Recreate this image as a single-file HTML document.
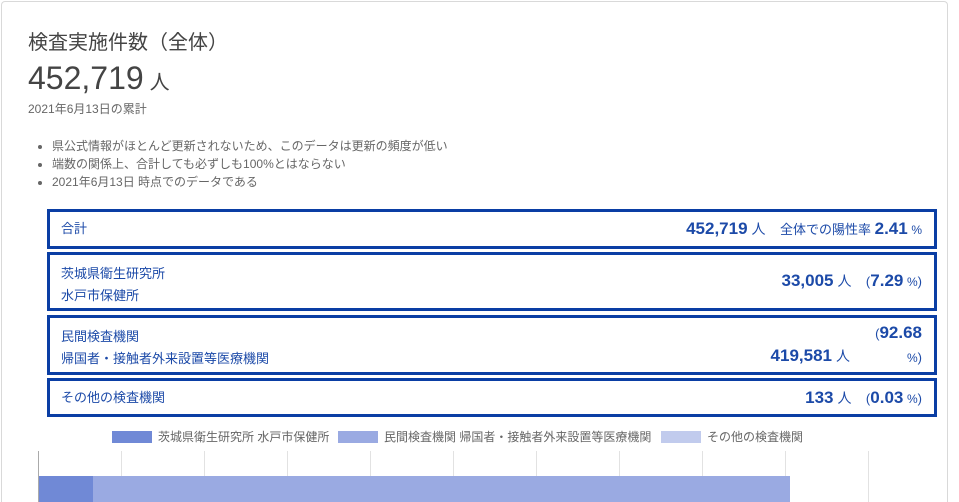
<!DOCTYPE html>
<html style="height:502px;overflow:hidden"><head><meta charset="utf-8"><style>
*{margin:0;padding:0;box-sizing:border-box}
body{width:959px;height:502px;overflow:hidden;background:#fff;font-family:"Liberation Sans","Noto Sans CJK JP",sans-serif;color:#333;position:relative}
.card{position:absolute;left:1px;top:1px;width:947px;height:501px;border:1px solid #d9d9d9;border-bottom:none;border-radius:4px 4px 0 0}
.t{position:absolute;left:28px;top:26px;font-size:20px;color:#444}
.n{position:absolute;left:28px;top:60px;font-size:32px;color:#444}
.n small{font-size:20px;margin-left:6px}
.d{position:absolute;left:28px;top:100px;font-size:12px;color:#666}
ul{position:absolute;left:52px;top:137px;font-size:12px;color:#666;line-height:18px}
.b{position:absolute;left:47px;width:890px;border:3px solid #0a3ea4;color:#1c4aa8;font-size:13px;line-height:18px}
.b .l{position:absolute;left:11px}
.b .r{position:absolute;right:12px;text-align:right;line-height:20px}
.big{font-size:17px;font-weight:bold}
.u{font-size:14px;margin-left:4px}
.pc{font-size:12px}
.lg{position:absolute;top:428px;font-size:12px;color:#666;display:flex;align-items:center}
.sw{width:40px;height:12px;display:inline-block;margin-right:6px}
.g{position:absolute;top:451px;width:1px;height:51px;background:#e2e2e2}
</style></head><body>
<div class="card"></div>
<div class="t">検査実施件数（全体）</div>
<div class="n">452,719<small>人</small></div>
<div class="d">2021年6月13日の累計</div>
<ul><li>県公式情報がほとんど更新されないため、このデータは更新の頻度が低い</li><li>端数の関係上、合計しても必ずしも100%とはならない</li><li>2021年6月13日 時点でのデータである</li></ul>
<div class="b" style="top:209px;height:40px"><span class="l" style="top:8px">合計</span><span class="r" style="top:7px"><span class="big">452,719</span><span class="u">人</span>&nbsp;&nbsp;&nbsp;&nbsp;全体での陽性率 <span class="big">2.41</span> <span class="pc">%</span></span></div>
<div class="b" style="top:252px;height:59px"><span class="l" style="top:8px;line-height:22px">茨城県衛生研究所<br>水戸市保健所</span><span class="r" style="top:16px"><span class="big">33,005</span><span class="u">人</span>&nbsp;&nbsp;&nbsp;&nbsp;(<span class="big">7.29</span> <span class="pc">%</span>)</span></div>
<div class="b" style="top:315px;height:60px"><span class="l" style="top:8px;line-height:22px">民間検査機関<br>帰国者・接触者外来設置等医療機関</span><span class="r" style="top:5px;right:12px">(<span class="big">92.68</span></span><span class="r" style="top:28px;right:84px"><span class="big">419,581</span><span class="u">人</span></span><span class="r" style="top:30px;right:12px"><span class="pc">%</span>)</span></div>
<div class="b" style="top:378px;height:39px"><span class="l" style="top:8px">その他の検査機関</span><span class="r" style="top:7px"><span class="big">133</span><span class="u">人</span>&nbsp;&nbsp;&nbsp;&nbsp;(<span class="big">0.03</span> <span class="pc">%</span>)</span></div>
<div class="lg" style="left:112px"><span class="sw" style="background:#7089d6"></span>茨城県衛生研究所 水戸市保健所</div>
<div class="lg" style="left:338px"><span class="sw" style="background:#9aaae2"></span>民間検査機関 帰国者・接触者外来設置等医療機関</div>
<div class="lg" style="left:661px"><span class="sw" style="background:#c1cbed"></span>その他の検査機関</div>
<div class="g" style="left:38px;background:#aaa"></div><div class="g" style="left:121px"></div><div class="g" style="left:204px"></div><div class="g" style="left:287px"></div><div class="g" style="left:370px"></div><div class="g" style="left:453px"></div><div class="g" style="left:536px"></div><div class="g" style="left:619px"></div><div class="g" style="left:702px"></div><div class="g" style="left:785px"></div><div class="g" style="left:868px"></div>
<div style="position:absolute;left:39px;top:476px;width:54px;height:26px;background:#7089d6"></div>
<div style="position:absolute;left:93px;top:476px;width:697px;height:26px;background:#9aaae2"></div>
</body></html>
